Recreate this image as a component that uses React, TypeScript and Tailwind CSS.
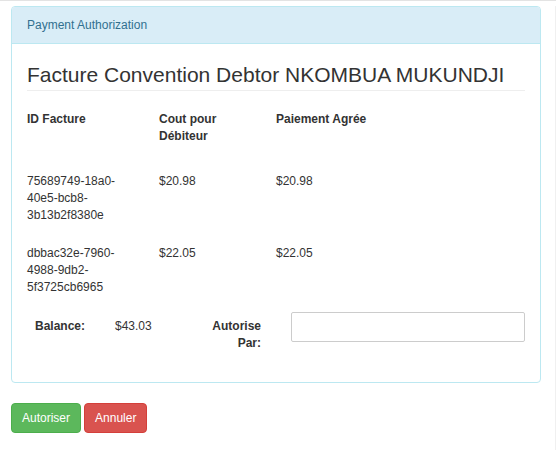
const invoices = [
  { id: "75689749-18a0-40e5-bcb8-3b13b2f8380e", cost: "$20.98", agreed: "$20.98" },
  { id: "dbbac32e-7960-4988-9db2-5f3725cb6965", cost: "$22.05", agreed: "$22.05" },
];

export default function App() {
  return (
    <div className="flex w-[556px] h-[450px] bg-white border-t border-[#e3e3e3] font-['Liberation_Sans',Arial,sans-serif] text-[12px] leading-[17px] text-[#333]">
      <div className="w-[555px] pl-[11px] pt-[5px]">
        {/* Panel */}
        <div className="w-[530px] border border-[#bce8f1] rounded-[4px] overflow-hidden">
          <div className="bg-[#d9edf7] border-b border-[#bce8f1] text-[#31708f] px-[15px] pt-[10px] pb-[9px]">
            Payment Authorization
          </div>

          <div className="px-[15px] pt-[19px] pb-[30px]">
            <h3 className="text-[21px] leading-[23px] pb-[4px] border-b border-[#eee]">
              Facture Convention Debtor NKOMBUA MUKUNDJI
            </h3>

            {/* Invoices */}
            <div className="grid grid-cols-[132px_117px_1fr] font-bold mt-[20px]">
              <div className="pr-[30px]">ID Facture</div>
              <div className="pr-[20px]">Cout pour Débiteur</div>
              <div>Paiement Agrée</div>
            </div>
            {invoices.map((inv, i) => (
              <div
                key={inv.id}
                className={`grid grid-cols-[132px_117px_1fr] ${i === 0 ? "mt-[28px]" : "mt-[21px]"}`}
              >
                <div className="pr-[30px] break-words">{inv.id}</div>
                <div>{inv.cost}</div>
                <div>{inv.agreed}</div>
              </div>
            ))}

            {/* Balance / authorisation */}
            <div className="flex items-start mt-[16px]">
              <div className="w-[58px] pt-[6px] text-right font-bold">Balance:</div>
              <div className="w-[116px] pl-[30px] pt-[6px]">$43.03</div>
              <div className="w-[60px] pt-[6px] text-right font-bold">Autorise Par:</div>
              <input
                type="text"
                className="flex-1 ml-[30px] h-[30px] border border-[#ccc] rounded-[2px] px-[10px] outline-none"
              />
            </div>
          </div>
        </div>

        {/* Actions */}
        <div className="flex gap-[3px] mt-[20px]">
          <button className="h-[30px] px-[10px] rounded-[4px] border border-[#4cae4c] bg-[#5cb85c] text-white">
            Autoriser
          </button>
          <button className="h-[30px] px-[10px] rounded-[4px] border border-[#d43f3a] bg-[#d9534f] text-white">
            Annuler
          </button>
        </div>
      </div>
      <div className="w-px mt-[5px] bg-[#f0f0f0]" />
    </div>
  );
}
